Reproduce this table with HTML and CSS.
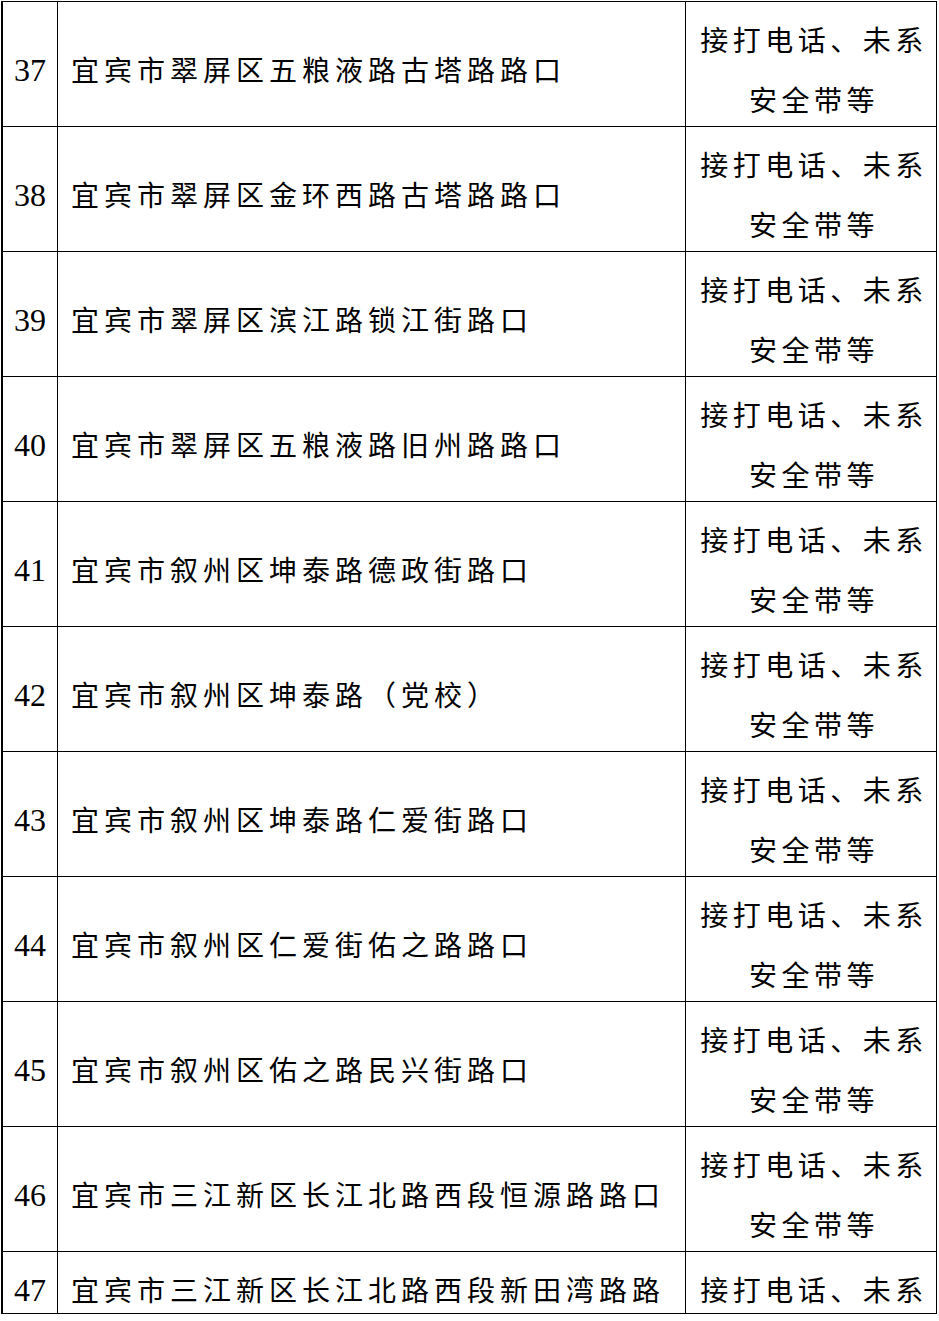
FILE: index.html
```html
<!DOCTYPE html>
<html lang="zh-CN">
<head>
<meta charset="utf-8">
<title>路口列表</title>
<link rel="stylesheet" href="styles.css">
</head>
<body>
<div class="table">
  <div class="row"><div class="num">37</div><div class="place">宜宾市翠屏区五粮液路古塔路路口</div><div class="act">接打电话、未系安全带等</div></div>
  <div class="row"><div class="num">38</div><div class="place">宜宾市翠屏区金环西路古塔路路口</div><div class="act">接打电话、未系安全带等</div></div>
  <div class="row"><div class="num">39</div><div class="place">宜宾市翠屏区滨江路锁江街路口</div><div class="act">接打电话、未系安全带等</div></div>
  <div class="row"><div class="num">40</div><div class="place">宜宾市翠屏区五粮液路旧州路路口</div><div class="act">接打电话、未系安全带等</div></div>
  <div class="row"><div class="num">41</div><div class="place">宜宾市叙州区坤泰路德政街路口</div><div class="act">接打电话、未系安全带等</div></div>
  <div class="row"><div class="num">42</div><div class="place">宜宾市叙州区坤泰路（党校）</div><div class="act">接打电话、未系安全带等</div></div>
  <div class="row"><div class="num">43</div><div class="place">宜宾市叙州区坤泰路仁爱街路口</div><div class="act">接打电话、未系安全带等</div></div>
  <div class="row"><div class="num">44</div><div class="place">宜宾市叙州区仁爱街佑之路路口</div><div class="act">接打电话、未系安全带等</div></div>
  <div class="row"><div class="num">45</div><div class="place">宜宾市叙州区佑之路民兴街路口</div><div class="act">接打电话、未系安全带等</div></div>
  <div class="row"><div class="num">46</div><div class="place">宜宾市三江新区长江北路西段恒源路路口</div><div class="act">接打电话、未系安全带等</div></div>
  <div class="row cut"><div class="num">47</div><div class="place">宜宾市三江新区长江北路西段新田湾路路口</div><div class="act">接打电话、未系安全带等</div></div>
</div>
</body>
</html>
```

FILE: styles.css
```css
html, body {
  margin: 0;
  padding: 0;
  background: #fff;
}
body {
  color: #000;
  font-family: "Noto Sans CJK SC", "Noto Sans CJK JP", sans-serif;
}
.table {
  margin: 1px 0 0 1px;
  width: 936px;
  box-sizing: border-box;
  border-top: 1px solid #000;
  border-left: 2px solid #000;
}
.row {
  display: grid;
  grid-template-columns: 55px 628px 251px;
  height: 125px;
  box-sizing: border-box;
  border-bottom: 1px solid #000;
}
.row > div {
  box-sizing: border-box;
  border-right: 1px solid #000;
  display: flex;
  align-items: center;
  height: 124px;
}
.row.cut {
  height: 62px;
  overflow: hidden;
}
.num {
  justify-content: center;
  font-family: "Liberation Serif", "Times New Roman", serif;
  font-size: 32px;
  padding-top: 13px;
}
.row.cut .num {
  align-items: flex-start;
  padding-top: 20px;
}
.place {
  font-size: 28px;
  letter-spacing: 5px;
  line-height: 60px;
  padding: 10px 8px 0 13px;
}
.act {
  justify-content: center;
  text-align: center;
  font-size: 28px;
  letter-spacing: 4.5px;
  line-height: 60px;
  padding: 9px 8px 0 14px;
}
```
